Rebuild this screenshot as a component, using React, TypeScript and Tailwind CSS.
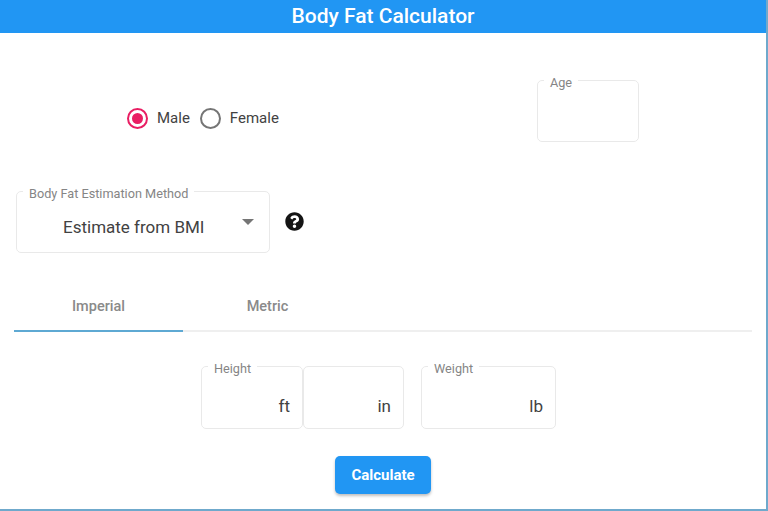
import React from "react";
import { FaQuestionCircle } from "react-icons/fa";

interface OutlinedFieldProps {
  label?: string;
  className?: string;
  children?: React.ReactNode;
}

const OutlinedField: React.FC<OutlinedFieldProps> = ({ label, className = "", children }) => (
  <fieldset className={`flex items-center rounded-[5px] border border-[#e9e9e9] ${className}`}>
    {label ? (
      <legend className="ml-[6px] translate-y-[2px] px-[6px] text-[12.7px] leading-[13px] text-[#858585]">
        {label}
      </legend>
    ) : (
      <legend className="h-[13px] w-0 p-0" />
    )}
    {children}
  </fieldset>
);

const Radio: React.FC<{ label: string; checked?: boolean }> = ({ label, checked }) => (
  <label className="flex items-center gap-[9px]">
    <span
      className={`flex h-[21px] w-[21px] items-center justify-center rounded-full border-2 ${
        checked ? "border-[#e91e63]" : "border-[#757575]"
      }`}
    >
      {checked && <span className="h-[11px] w-[11px] rounded-full bg-[#e91e63]" />}
    </span>
    <span className="text-[15px] text-[#424242]">{label}</span>
  </label>
);

const Unit: React.FC<{ children: React.ReactNode }> = ({ children }) => (
  <span className="ml-auto mr-[12px] pt-[13px] text-[17px] text-[#424242]">{children}</span>
);

export default function App() {
  return (
    <div className="flex h-[511px] w-[768px] flex-col border-r-2 border-b-2 border-[#6fa9cc] bg-white font-['Roboto',sans-serif]">
      <header className="flex h-[33px] shrink-0 items-center justify-center bg-[#2196f3]">
        <h1 className="text-[21px] font-medium text-white">Body Fat Calculator</h1>
      </header>

      <div className="mt-[41px] flex items-center">
        <div className="ml-[127px] mt-[21px] flex gap-[10px]">
          <Radio label="Male" checked />
          <Radio label="Female" />
        </div>
        <OutlinedField label="Age" className="ml-[258px] h-[68px] w-[102px]" />
      </div>

      <div className="mt-[43px] flex items-center pl-[16px]">
        <OutlinedField label="Body Fat Estimation Method" className="h-[68px] w-[254px]">
          <span className="ml-[46px] pt-[5px] text-[17px] text-[#424242]">Estimate from BMI</span>
          <span className="mt-[-6px] ml-auto mr-[15px] h-0 w-0 border-x-[6px] border-t-[6px] border-x-transparent border-t-[#757575]" />
        </OutlinedField>
        <FaQuestionCircle className="ml-[15px] mt-[4px] text-[19px] text-[#141414]" />
      </div>

      <nav className="mx-[14px] mt-[30px] flex border-b-2 border-[#efefef]">
        <div className="mb-[-2px] flex h-[49px] w-[169px] items-center justify-center border-b-2 border-[#5ea9d3] text-[14.5px] font-medium text-[#8a8a8a]">
          Imperial
        </div>
        <div className="flex h-[47px] w-[169px] items-center justify-center text-[14.5px] font-medium text-[#8a8a8a]">
          Metric
        </div>
      </nav>

      <div className="mt-[28px] flex justify-center pr-[9px]">
        <OutlinedField label="Height" className="h-[69px] w-[102px]">
          <Unit>ft</Unit>
        </OutlinedField>
        <OutlinedField className="h-[69px] w-[101px]">
          <Unit>in</Unit>
        </OutlinedField>
        <OutlinedField label="Weight" className="ml-[17px] h-[69px] w-[135px]">
          <Unit>lb</Unit>
        </OutlinedField>
      </div>

      <div className="mt-[27px] flex justify-center">
        <button className="h-[38px] w-[96px] rounded-[5px] bg-[#2196f3] text-[15px] font-bold text-white shadow-[0_2px_3px_rgba(0,0,0,0.25)]">
          Calculate
        </button>
      </div>
    </div>
  );
}
